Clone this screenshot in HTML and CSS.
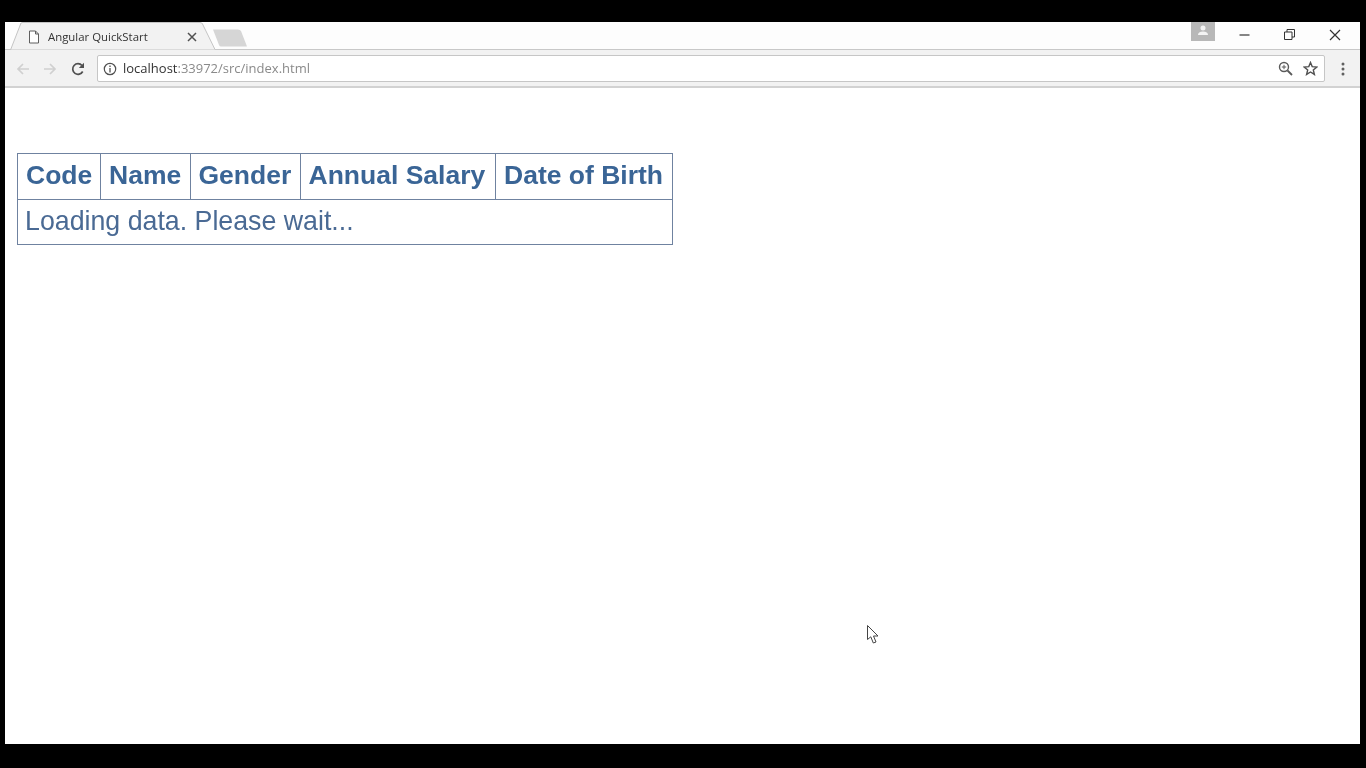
FILE: index.html
```html
<!DOCTYPE html>
<html>

<head>
    <meta charset="UTF-8">
    <title>Angular QuickStart</title>
    <link rel="stylesheet" href="styles.css">
</head>

<body>
    <div class="window">
        <div class="tabstrip">
            <div class="tab">
                <svg class="tab-shape" width="206" height="28" viewBox="0 0 206 28">
                    <path d="M0.5 28 L11 1 Q11.5 0.5 13 0.5 L190 0.5 Q192 0.5 192.500 2 L205 27.500 L206 28 Z" fill="#f2f2f2" stroke="#c4c4c4" />
                </svg>
                <svg class="tab-page" width="12" height="14" viewBox="0 0 12 14">
                    <path d="M1.500 1 H7.500 L10.500 4 V13 H1.500 Z M7.500 1 V4 H10.500" fill="#fff" stroke="#5f5f5f" />
                </svg>
                <span class="tab-title">Angular QuickStart</span>
                <svg class="tab-close" width="10" height="10" viewBox="0 0 10 10">
                    <path d="M1 1 L9 9 M9 1 L1 9" stroke="#505050" stroke-width="1.500" />
                </svg>
            </div>
            <svg class="newtab" width="34" height="18" viewBox="0 0 34 18">
                <path d="M0 0.500 H25 Q27 0.500 28 2 L34 17.500 H8 Q6.500 17.500 6 16 Z" fill="#d6d6d6" />
            </svg>
            <div class="spacer"></div>
            <div class="profile">
                <svg width="12" height="11" viewBox="0 0 12 11">
                    <circle cx="6" cy="3" r="2.500" fill="#f4f4f4" />
                    <path d="M1 10 Q1 6.500 6 6.500 Q11 6.500 11 10 Z" fill="#f4f4f4" />
                </svg>
            </div>
            <div class="winbtn">
                <svg width="11" height="11" viewBox="0 0 11 11">
                    <path d="M0.500 6 H10.500" stroke="#444" stroke-width="1.300" />
                </svg>
            </div>
            <div class="winbtn">
                <svg width="11" height="11" viewBox="0 0 11 11">
                    <path d="M0.500 3 H8 V10.500 H0.500 Z M3 3 V0.500 H10.500 V8 H8" fill="none" stroke="#333" />
                </svg>
            </div>
            <div class="winbtn">
                <svg width="12" height="12" viewBox="0 0 12 12">
                    <path d="M1 1 L11 11 M11 1 L1 11" stroke="#333" stroke-width="1.200" />
                </svg>
            </div>
        </div>

        <div class="toolbar">
            <svg class="navicon" width="14" height="14" viewBox="0 0 14 14">
                <path d="M13 7 H2 M7 2 L2 7 L7 12" fill="none" stroke="#d0d0d0" stroke-width="1.700" />
            </svg>
            <svg class="navicon" width="14" height="14" viewBox="0 0 14 14">
                <path d="M1 7 H12 M7 2 L12 7 L7 12" fill="none" stroke="#d0d0d0" stroke-width="1.700" />
            </svg>
            <svg class="navicon" width="14" height="14" viewBox="0 0 14 14">
                <path d="M11.700 9.500 A5.300 5.300 0 1 1 11 3.500" fill="none" stroke="#505050" stroke-width="1.700" />
                <path d="M13 0.800 V6 H7.800 Z" fill="#505050" />
            </svg>
            <div class="omnibox">
                <svg width="14" height="14" viewBox="0 0 14 14">
                    <circle cx="7" cy="7" r="5.700" fill="none" stroke="#505050" stroke-width="1.200" />
                    <path d="M7 6 V10.500 M7 3.500 V5" stroke="#505050" stroke-width="1.300" />
                </svg>
                <span class="url"><span class="host">localhost</span>:33972/src/index.html</span>
                <div class="spacer"></div>
                <svg width="15" height="15" viewBox="0 0 15 15">
                    <circle cx="6" cy="6" r="4.500" fill="none" stroke="#5a5a5a" stroke-width="1.400" />
                    <path d="M9.500 9.500 L14 14" stroke="#5a5a5a" stroke-width="1.800" />
                    <path d="M3.800 6 H8.200 M6 3.800 V8.200" stroke="#5a5a5a" />
                </svg>
                <svg class="star" width="15" height="15" viewBox="0 0 15 15">
                    <path d="M7.500 1.500 L9.200 5.600 L13.800 6 L10.300 8.900 L11.400 13.400 L7.500 11 L3.600 13.400 L4.700 8.900 L1.200 6 L5.800 5.600 Z" fill="none" stroke="#505050" stroke-width="1.400" />
                </svg>
            </div>
            <svg class="menu" width="4" height="14" viewBox="0 0 4 14">
                <circle cx="2" cy="2" r="1.500" fill="#606060" />
                <circle cx="2" cy="7" r="1.500" fill="#606060" />
                <circle cx="2" cy="12" r="1.500" fill="#606060" />
            </svg>
        </div>

        <div class="page">
            <table class="employees">
                <thead>
                    <tr>
                        <th>Code</th>
                        <th>Name</th>
                        <th>Gender</th>
                        <th>Annual Salary</th>
                        <th>Date of Birth</th>
                    </tr>
                </thead>
                <tbody>
                    <tr>
                        <td colspan="5">Loading data. Please wait...</td>
                    </tr>
                </tbody>
            </table>
        </div>

        <svg class="pointer" width="12" height="19" viewBox="0 0 12 19">
            <path d="M0.500 0.500 V14.500 L3.800 11.800 L6.300 18 L9 17 L6.500 11 L11 11 Z" fill="#fff" stroke="#444" />
        </svg>
    </div>
</body>

</html>
```

FILE: styles.css
```css
* {
    box-sizing: border-box;
}

html,
body {
    margin: 0;
    padding: 0;
    height: 100vh;
    overflow: hidden;
    background-color: black;
    font-family: "Liberation Sans", Arial, sans-serif;
}

body {
    padding: 22px 6px 24px 5px;
}

/* the reference is a video frame, so everything is slightly soft */
.window {
    position: relative;
    display: flex;
    flex-direction: column;
    height: 100%;
    background-color: white;
    filter: blur(0.4px);
}

.spacer {
    flex: 1;
}

/* tab row */
.tabstrip {
    display: flex;
    align-items: flex-start;
    height: 28px;
    padding-right: 3px;
    border-bottom: 1px solid #c8c8c8;
    background-color: #fdfdfd;
}

.tab {
    position: relative;
    display: flex;
    align-items: center;
    width: 203px;
    height: 28px;
    margin-left: 5px;
    padding-left: 18px;
}

.tab-shape {
    position: absolute;
    top: 0;
    left: 0;
}

.tab-page,
.tab-title,
.tab-close {
    position: relative;
    flex-shrink: 0;
}

.tab-page {
    margin-top: 1px;
}

.tab-title {
    width: 139px;
    margin-left: 8px;
    margin-top: 1px;
    font-family: "Open Sans", sans-serif;
    font-size: 11.400px;
    color: #333;
}

.tab-close {
    margin-top: 1px;
}

.newtab {
    margin-top: 7px;
}

.profile {
    display: flex;
    justify-content: center;
    padding-top: 3px;
    width: 24px;
    height: 19px;
    margin-right: 7px;
    background-color: #b8b8b8;
}

.winbtn {
    display: flex;
    justify-content: center;
    align-items: center;
    width: 45px;
    height: 25px;
}

/* address row */
.toolbar {
    display: flex;
    align-items: center;
    height: 38px;
    padding: 1px 0 0 11px;
    border-bottom: 2px solid #d2d2d2;
    background-color: #f2f2f2;
}

.navicon {
    margin-right: 13px;
}

.navicon:nth-child(2) {
    margin-right: 14px;
}

.navicon:nth-child(3) {
    margin-right: 12px;
}

.omnibox {
    display: flex;
    align-items: center;
    width: 1228px;
    height: 27px;
    padding: 0 6px 0 5px;
    border: 1px solid #c6c6c6;
    border-radius: 2px;
    background-color: white;
}

.url {
    margin-left: 6px;
    margin-bottom: 2px;
    font-family: "Open Sans", sans-serif;
    font-size: 13px;
    color: #8a8a8a;
}

.host {
    color: #333;
}

.star {
    margin-left: 10px;
}

.menu {
    margin-left: 16px;
}

/* page content */
.page {
    flex: 1;
    padding: 65px 0 0 12px;
}

.employees {
    table-layout: fixed;
    width: 656px;
    border-collapse: collapse;
    color: #3a6596;
    font-size: 26.500px;
}

.employees th,
.employees td {
    height: 46px;
    padding: 0 8px 2px;
    border: 1px solid #6f82a0;
    text-align: left;
    white-space: nowrap;
}

.employees td {
    height: 45px;
    padding-left: 7px;
    color: #4a6a94;
    font-size: 26.750px;
    font-weight: normal;
}

.employees th:nth-child(1) {
    width: 83px;
}

.employees th:nth-child(2) {
    width: 89.500px;
}

.employees th:nth-child(3) {
    width: 110px;
}

.employees th:nth-child(4) {
    width: 195.500px;
}

/* mouse pointer in the capture */
.pointer {
    position: absolute;
    top: 603px;
    left: 862px;
}
```
